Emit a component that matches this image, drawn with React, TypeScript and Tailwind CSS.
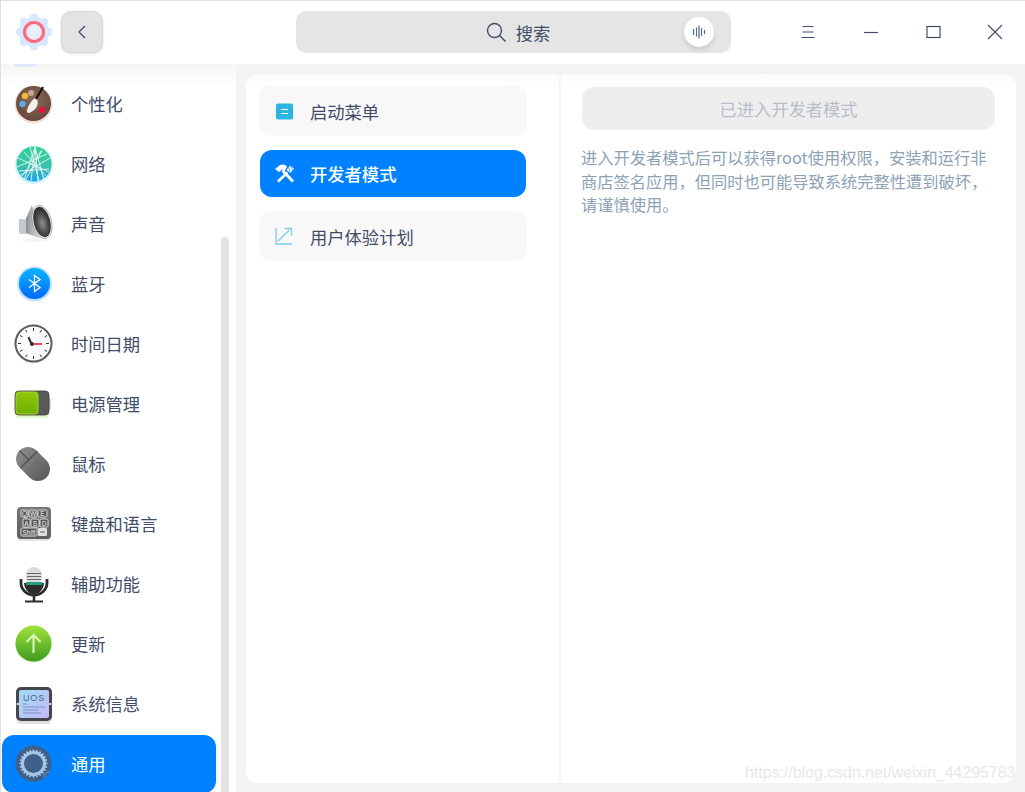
import type { ReactNode } from "react";

// 左侧图标都在 40x40 的格子里画
function Box({ children }: { children: ReactNode }) {
  return (
    <svg width="40" height="40" viewBox="0 0 40 40" className="shrink-0">
      {children}
    </svg>
  );
}

const PaletteIcon = () => (
  <Box>
    <defs>
      <radialGradient id="pal" cx="0.5" cy="0.4" r="0.7">
        <stop offset="0" stopColor="#8a6a58" />
        <stop offset="1" stopColor="#5f4336" />
      </radialGradient>
    </defs>
    <circle cx="19.500" cy="20.500" r="19" fill="#d9a48c" opacity="0.35" />
    <circle cx="19.500" cy="19.500" r="17.500" fill="url(#pal)" />
    <circle cx="11" cy="12" r="3.200" fill="#f5b52e" />
    <circle cx="8.500" cy="20" r="3.200" fill="#5ba8ee" />
    <circle cx="17" cy="9" r="3" fill="#c9a595" />
    <circle cx="28" cy="26" r="3.200" fill="#e0163f" />
    <path d="M23 15C25 20 23 26 15 29C13 29 12.500 27.500 13 26C14 22 17 17 21 14Z" fill="#f4f1ea" />
    <path d="M22 15L29 3" stroke="#111" strokeWidth="2.200" />
  </Box>
);

const NetworkIcon = () => (
  <Box>
    <defs>
      <linearGradient id="net" x1="0" y1="0" x2="0" y2="1">
        <stop offset="0" stopColor="#2fd39a" />
        <stop offset="0.55" stopColor="#3cc0a8" />
        <stop offset="1" stopColor="#1ba4ea" />
      </linearGradient>
    </defs>
    <circle cx="20" cy="21" r="19" fill="#7fe6f0" opacity="0.4" />
    <circle cx="20" cy="20" r="17.500" fill="url(#net)" />
    <g stroke="#fff" strokeWidth="0.9" opacity="0.9">
      <path d="M21 3L10 36M21 3l9 33M21 3l-4 34M21 3l3 34M4 14l31 14M36 14L7 31M3 23l30-13M10 8l22 24M28 7L12 35M16 3l9 34M5 27l30-2M8 32l20-26" />
    </g>
  </Box>
);

const SpeakerIcon = () => (
  <Box>
    <defs>
      <radialGradient id="spk" cx="0.5" cy="0.55" r="0.6">
        <stop offset="0" stopColor="#8e8e8e" />
        <stop offset="0.55" stopColor="#4a4a4a" />
        <stop offset="1" stopColor="#1f1f1f" />
      </radialGradient>
      <linearGradient id="cone" x1="0" y1="0" x2="1" y2="0">
        <stop offset="0" stopColor="#8d8f96" />
        <stop offset="1" stopColor="#e6e6e6" />
      </linearGradient>
    </defs>
    <ellipse cx="20" cy="36" rx="13" ry="2" fill="#000" opacity="0.04" />
    <path d="M5 15h8v15H7c-1.500 0-2-1-2-2z" fill="#c4c8d0" />
    <path d="M12 14L18 1L27 35L12 29Z" fill="url(#cone)" />
    <ellipse cx="28" cy="18" rx="9.500" ry="17" transform="rotate(-14 28 18)" fill="#f2f2f2" stroke="#777" strokeWidth="0.5" />
    <ellipse cx="28" cy="18" rx="8.300" ry="15.500" transform="rotate(-14 28 18)" fill="url(#spk)" />
  </Box>
);

const BluetoothIcon = () => (
  <Box>
    <defs>
      <linearGradient id="bt" x1="0" y1="0" x2="0" y2="1">
        <stop offset="0" stopColor="#0ab4ff" />
        <stop offset="1" stopColor="#0069ff" />
      </linearGradient>
    </defs>
    <circle cx="20.500" cy="20" r="17.500" fill="#4aa8ff" opacity="0.35" />
    <circle cx="20.500" cy="19.500" r="15.500" fill="url(#bt)" />
    <path d="M15 15.500l11 8-5.500 4V11.500l5.500 4-11 8" fill="none" stroke="#fff" strokeWidth="1.300" />
  </Box>
);

const ClockIcon = () => (
  <Box>
    <circle cx="19.500" cy="20.500" r="19" fill="#000" opacity="0.08" />
    <circle cx="19.500" cy="19.500" r="18" fill="#fbfbfb" stroke="#5c5c5c" strokeWidth="2" />
    <g stroke="#333" strokeWidth="1">
      <path d="M19.500 4v3M19.500 32v3M4 19.500h3M32 19.500h3M11.500 6l1.500 2.500M27.500 6L26 8.500M6 11.500l2.500 1.500M33 11.500L30.500 13M6 27.500L8.500 26M33 27.500L30.500 26M11.500 33l1.500-2.500M27.500 33L26 30.500" />
    </g>
    <path d="M17.500 20l-3-7" stroke="#333" strokeWidth="2" />
    <path d="M17 20h11" stroke="#f0485c" strokeWidth="2" />
    <circle cx="18" cy="20" r="2" fill="#333" />
  </Box>
);

const BatteryIcon = () => (
  <Box>
    <defs>
      <linearGradient id="bat" x1="0" y1="0" x2="0" y2="1">
        <stop offset="0" stopColor="#8fcb0c" />
        <stop offset="1" stopColor="#6fae00" />
      </linearGradient>
    </defs>
    <rect x="1" y="9" width="34" height="25" rx="4" fill="#c6ee7c" opacity="0.45" />
    <rect x="33" y="14" width="4" height="12" rx="2" fill="#d5d5d5" />
    <rect x="1" y="7" width="34" height="24" rx="4" fill="#5a5a5a" stroke="#3a3a3a" strokeWidth="0.8" />
    <rect x="2" y="8" width="22" height="22" rx="3" fill="url(#bat)" stroke="#a4d82a" strokeWidth="1" />
  </Box>
);

const MouseIcon = () => (
  <Box>
    <defs>
      <linearGradient id="ms" x1="0" y1="0" x2="0" y2="1">
        <stop offset="0" stopColor="#8a8a8a" />
        <stop offset="1" stopColor="#5c5c5c" />
      </linearGradient>
    </defs>
    <g transform="rotate(-45 19 20)">
      <rect x="7" y="1" width="24" height="38" rx="12" fill="url(#ms)" />
      <path d="M7 14h24M19 1v13" stroke="#444" strokeWidth="1" />
    </g>
  </Box>
);

const KeyboardIcon = () => {
  const keys = [
    [7, 6, 7, 7, "Q"],
    [15, 6, 8, 7, "W"],
    [24, 6, 9, 7, "E"],
    [9, 15, 7, 8, "A"],
    [17, 15, 8, 8, "S"],
    [26, 15, 8, 8, "D"],
    [7, 24, 16, 8, "Shift"],
  ] as const;
  return (
    <Box>
      <defs>
        <linearGradient id="kb" x1="0" y1="0" x2="0" y2="1">
          <stop offset="0" stopColor="#777" />
          <stop offset="1" stopColor="#5e5e5e" />
        </linearGradient>
      </defs>
      <rect x="3" y="4" width="34" height="33" rx="4" fill="#000" opacity="0.1" />
      <rect x="3" y="3" width="34" height="32" rx="4" fill="url(#kb)" />
      {keys.map(([x, y, w, h, l]) => (
        <g key={l}>
          <rect x={x} y={y} width={w} height={h} rx="1.200" fill="#555" stroke="#ececec" strokeWidth="0.9" />
          <text x={x + w / 2} y={y + h - 1.200} fontSize="6.500" fill="#f2f2f2" textAnchor="middle" fontFamily="Liberation Sans, sans-serif">
            {l}
          </text>
        </g>
      ))}
      <rect x="24" y="24" width="9" height="8" rx="1.200" fill="#e0e0e0" />
      <path d="M26 28h5" stroke="#666" strokeWidth="1" />
    </Box>
  );
};

const MicIcon = () => (
  <Box>
    <path d="M7 15v4a13 12 0 0 0 26 0v-4" fill="none" stroke="#2c2c2c" strokeWidth="2.800" />
    <path d="M10 19h20a10 11 0 0 1-20 0z" fill="#2c2c2c" />
    <rect x="12" y="3" width="16" height="18" rx="8" fill="#dcdcdc" />
    <path d="M13 9.500h14M13 12.500h14M13 15.500h14" stroke="#666" strokeWidth="1.200" />
    <path d="M12 18h16v3H12z" fill="#1f9e85" />
    <path d="M20 30v7" stroke="#2c2c2c" strokeWidth="2.500" />
    <path d="M11 37.500h18" stroke="#2c2c2c" strokeWidth="2" />
  </Box>
);

const UpdateIcon = () => (
  <Box>
    <defs>
      <linearGradient id="upd" x1="0" y1="0" x2="0" y2="1">
        <stop offset="0" stopColor="#a1e33c" />
        <stop offset="1" stopColor="#3f9a1f" />
      </linearGradient>
    </defs>
    <circle cx="19.500" cy="20.500" r="18.500" fill="#a8f07a" opacity="0.35" />
    <circle cx="19.500" cy="19.500" r="18" fill="url(#upd)" />
    <path d="M19.500 29V11M12.500 18l7-7 7 7" fill="none" stroke="#dff7bf" strokeWidth="2" />
  </Box>
);

const InfoIcon = () => (
  <Box>
    <defs>
      <linearGradient id="inf" x1="0" y1="0" x2="1" y2="1">
        <stop offset="0" stopColor="#9edcf8" />
        <stop offset="1" stopColor="#c8b8f8" />
      </linearGradient>
    </defs>
    <rect x="2" y="4" width="36" height="36" rx="5" fill="#000" opacity="0.12" />
    <rect x="2" y="3" width="36" height="34" rx="5" fill="#45464c" />
    <rect x="5" y="6" width="30" height="28" rx="2" fill="url(#inf)" />
    <circle cx="3.800" cy="20" r="1.200" fill="#ddd" />
    <circle cx="36.200" cy="20" r="1.200" fill="#ddd" />
    <text x="20" y="16.500" fontSize="9" letterSpacing="0.8" fill="#4c6680" textAnchor="middle" fontFamily="Liberation Sans, sans-serif">
      UOS
    </text>
    <path d="M9 20h4M9 23h22M9 26h16M9 29h18" stroke="#7f8fbb" strokeWidth="1" />
  </Box>
);

const GeneralIcon = () => {
  const teeth = Array.from({ length: 24 }, (_, i) => i * 15);
  return (
    <Box>
      <circle cx="19.500" cy="19.500" r="18" fill="#3f6088" />
      <circle cx="19.500" cy="19.500" r="11" fill="none" stroke="#a9c6e6" strokeWidth="3" />
      {teeth.map((a) => (
        <rect key={a} x="18.700" y="5.500" width="1.600" height="3" fill="#a9c6e6" transform={`rotate(${a} 19.500 19.500)`} />
      ))}
      <path d="M30 33a5 5 0 0 1 5-5" fill="none" stroke="#8fa8c4" strokeWidth="1" />
    </Box>
  );
};

const LogoIcon = () => {
  const teeth = Array.from({ length: 8 }, (_, i) => i * 45);
  return (
    <svg width="38" height="38" viewBox="0 0 38 38">
      <circle cx="19" cy="19" r="15" fill="#d8e8fb" />
      {teeth.map((a) => (
        <circle key={a} cx="19" cy="4.800" r="4.200" fill="#d8e8fb" transform={`rotate(${a} 19 19)`} />
      ))}
      <circle cx="19" cy="19" r="9.500" fill="#e8eef8" stroke="#ff6982" strokeWidth="3.200" />
    </svg>
  );
};

const DevIcon = () => (
  <svg width="20" height="20" viewBox="0 0 20 20">
    <path d="M0 5L5 1Q8 0 11 1.500L12 3L9.500 7L7 5.500L4 8Z" fill="#fff" />
    <path d="M7.500 6.500L18 17.500" stroke="#fff" strokeWidth="3" />
    <path d="M17 3L13.500 7.500" stroke="#fff" strokeWidth="5" />
    <path d="M15.500 1.500l2 5M13.500 3.500l2 5" stroke="#0081ff" strokeWidth="0.7" />
    <path d="M12.500 8.500L3 17.500" stroke="#fff" strokeWidth="2.600" />
  </svg>
);

const menu: { label: string; icon: ReactNode }[] = [
  { label: "个性化", icon: <PaletteIcon /> },
  { label: "网络", icon: <NetworkIcon /> },
  { label: "声音", icon: <SpeakerIcon /> },
  { label: "蓝牙", icon: <BluetoothIcon /> },
  { label: "时间日期", icon: <ClockIcon /> },
  { label: "电源管理", icon: <BatteryIcon /> },
  { label: "鼠标", icon: <MouseIcon /> },
  { label: "键盘和语言", icon: <KeyboardIcon /> },
  { label: "辅助功能", icon: <MicIcon /> },
  { label: "更新", icon: <UpdateIcon /> },
  { label: "系统信息", icon: <InfoIcon /> },
];

function App() {
  return (
    <div className="relative w-[1025px] h-[792px] overflow-hidden flex flex-col bg-[#f3f3f3] border-t border-l border-[#e0e0e0] font-['Noto_Sans_CJK_SC','Noto_Sans',sans-serif] text-[17.3px] text-[#414d68]">
      {/* 标题栏 */}
      <header className="h-[63px] shrink-0 bg-white pt-[10px]">
        <div className="h-[42px] flex items-center">
          <div className="ml-[14px] w-[38px] flex justify-center">
            <LogoIcon />
          </div>
          <button className="ml-[8px] w-[42px] h-[42px] rounded-[10px] bg-[#e3e3e3] border border-[#d8d8d8] shadow-sm flex items-center justify-center">
            <svg width="12" height="16" viewBox="0 0 12 16" fill="none" stroke="#414d68" strokeWidth="1.300">
              <path d="M9 2L3 8l6 6" />
            </svg>
          </button>
          <div className="relative ml-[193px] w-[435px] h-[42px] rounded-[10px] bg-[#e5e5e5] flex items-center justify-center gap-[9px] pl-[9px]">
            <svg width="21" height="21" viewBox="0 0 21 21" fill="none" stroke="#414d68" strokeWidth="1.400">
              <circle cx="8.500" cy="8.500" r="7" />
              <path d="M13.500 13.500l6 6" />
            </svg>
            <span className="pt-px">搜索</span>
            <div className="absolute left-[388px] top-[6px] w-[30px] h-[30px] rounded-full bg-white shadow-md flex items-center justify-center">
              <svg width="14" height="14" viewBox="0 0 14 14" stroke="#526a7f" strokeWidth="1.200">
                <path d="M1.500 4v6M4.500 2.500v9M7 .5v13M9.500 3v8M12.500 5v4" />
              </svg>
            </div>
          </div>
          <div className="ml-[67px] flex items-center">
            <button className="w-[20px] h-[20px] flex items-center justify-center">
              <svg width="14" height="14" viewBox="0 0 14 14" stroke="#414d68" strokeWidth="1">
                <path d="M1.500 1.500h11M1.500 7h11M.5 12.500h13" />
              </svg>
            </button>
            <button className="ml-[43px] w-[20px] h-[20px] flex items-center justify-center">
              <svg width="14" height="14" viewBox="0 0 14 14" stroke="#414d68" strokeWidth="1.200">
                <path d="M0 7.500h14" />
              </svg>
            </button>
            <button className="ml-[42px] w-[20px] h-[20px] flex items-center justify-center">
              <svg width="15" height="14" viewBox="0 0 15 14" fill="none" stroke="#414d68" strokeWidth="1.200">
                <rect x="1" y="1.500" width="13" height="11" />
              </svg>
            </button>
            <button className="ml-[42px] w-[20px] h-[20px] flex items-center justify-center">
              <svg width="16" height="16" viewBox="0 0 16 16" stroke="#414d68" strokeWidth="1.200">
                <path d="M1 1l14 14M15 1L1 15" />
              </svg>
            </button>
          </div>
        </div>
      </header>

      <div className="flex-1 min-h-0 flex">
        {/* 左侧菜单 */}
        <aside className="relative w-[235px] shrink-0 bg-linear-to-b from-[#f6f6f6] via-white via-[3%] to-white overflow-hidden">
          <div className="h-[10px] pl-[12px] overflow-hidden">
            <div className="w-[24px] h-[3px] rounded-b-full bg-[#dfeafa]" />
          </div>
          <nav className="w-[216px] flex flex-col">
            {menu.map((m) => (
              <div key={m.label} className="h-[60px] shrink-0 pl-[13px] flex items-center gap-[17px]">
                {m.icon}
                <span>{m.label}</span>
              </div>
            ))}
            <div className="ml-px mt-px h-[58px] w-[214px] shrink-0 rounded-[12px] bg-[#0081ff] pl-[12px] flex items-center gap-[17px] text-white">
              <GeneralIcon />
              <span>通用</span>
            </div>
          </nav>
          {/* 滚动条 */}
          <div className="absolute left-[220px] top-[173px] w-[8px] h-[600px] rounded-[4px] bg-[#e3e3e3]" />
        </aside>

        {/* 内容区 */}
        <main className="flex-1 min-w-0 flex pl-[10px] pr-[9px] pt-[10px] pb-[9px]">
          <section className="w-[313px] shrink-0 bg-linear-to-b from-[#fbfbfb] via-white via-[2%] to-white rounded-l-[12px] px-[13px] pt-[12px] flex flex-col">
            <div className="h-[50px] w-[268px] rounded-[12px] bg-[#f8f8f8] pl-[17px] flex items-center gap-[17px]">
              <svg width="17" height="17" viewBox="0 0 17 17" className="shrink-0">
                <rect x="0" y="0.500" width="17" height="16" rx="2" fill="#2cb5de" />
                <path d="M5 6.500h7M5 10.500h7" stroke="#fff" strokeWidth="1" />
              </svg>
              <span className="pt-px">启动菜单</span>
            </div>
            <div className="mt-[14px] ml-px h-[47px] w-[266px] rounded-[12px] bg-[#0081ff] pl-[15px] flex items-center gap-[15px] text-white font-medium">
              <DevIcon />
              <span>开发者模式</span>
            </div>
            <div className="mt-[14px] h-[50px] w-[268px] rounded-[12px] bg-[#f8f8f8] pl-[16px] flex items-center gap-[17px]">
              <svg width="18" height="18" viewBox="0 0 18 18" fill="none" stroke="#7bd0e6" strokeWidth="1.300" className="shrink-0">
                <path d="M1 1v16h16" />
                <path d="M2.500 14.500L14.500 3M9.500 1.500h7v7" />
              </svg>
              <span className="pt-px">用户体验计划</span>
            </div>
          </section>
          <div className="w-[2px] shrink-0 bg-[#f5f5f5]" />
          <section className="flex-1 min-w-0 bg-linear-to-b from-[#fbfbfb] via-white via-[2%] to-white rounded-r-[12px] px-[21px] pt-[13px]">
            <div className="h-[43px] rounded-[12px] bg-[#eeeeee] flex items-center justify-center text-[#b8bec9]">
              已进入开发者模式
            </div>
            <p className="-ml-px mt-[16px] text-[16.25px] leading-[23.5px] text-[#8da2b5]">
              进入开发者模式后可以获得root使用权限，安装和运行非商店签名应用，但同时也可能导致系统完整性遭到破坏，请谨慎使用。
            </p>
          </section>
        </main>
      </div>

      {/* 水印 */}
      <div className="absolute left-[744px] top-[761px] font-['Liberation_Sans',sans-serif] text-[15.9px] leading-[22px] text-[#e8e8e8] whitespace-nowrap">
        https://blog.csdn.net/weixin_44295783
      </div>
    </div>
  );
}

export default App;
